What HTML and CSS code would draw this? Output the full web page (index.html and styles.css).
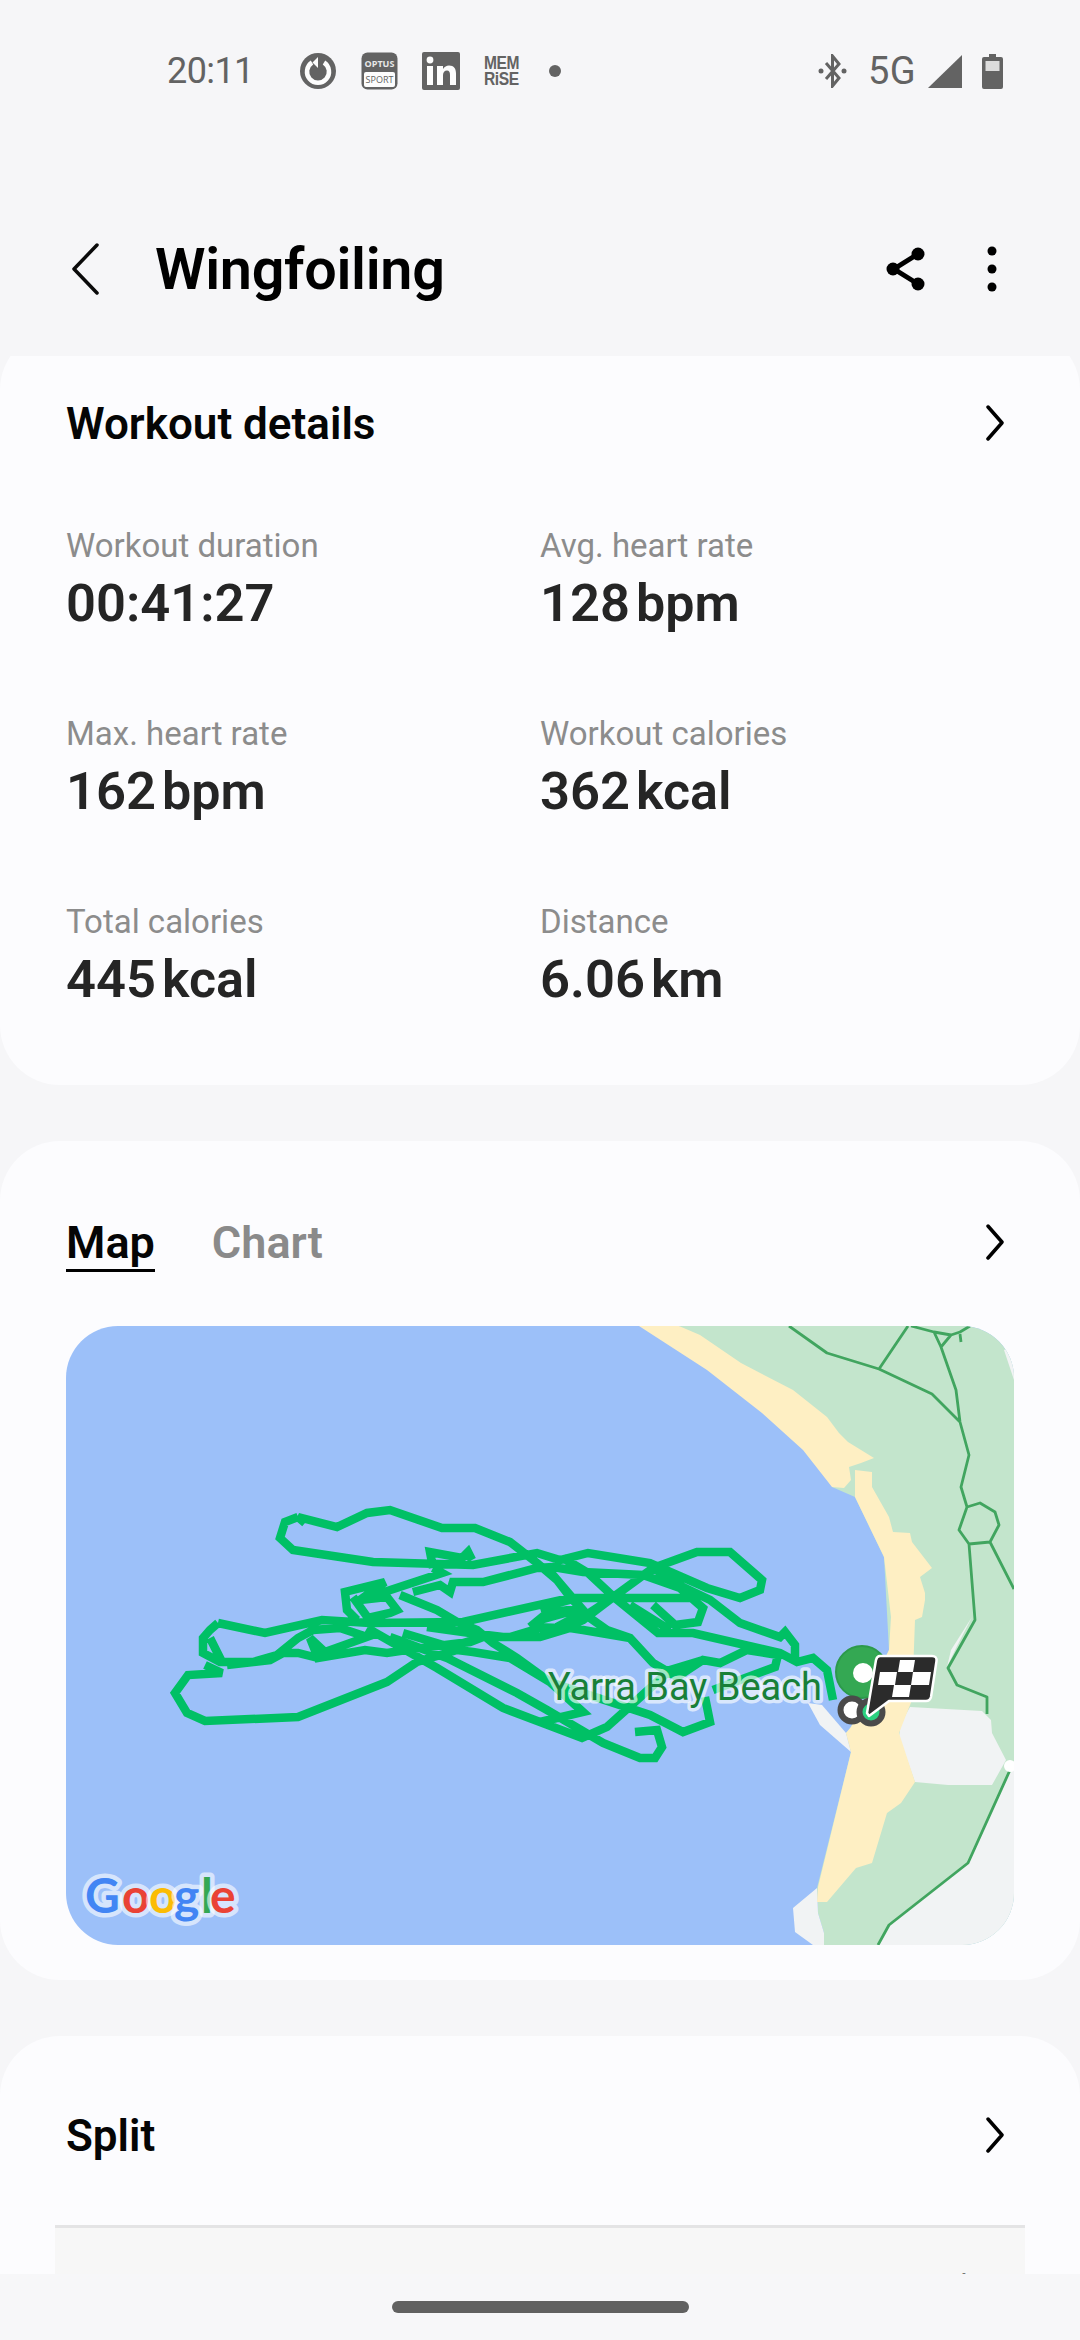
FILE: index.html
```html
<!DOCTYPE html>
<html lang="en">
<head>
<meta charset="utf-8">
<title>Wingfoiling</title>
<link rel="stylesheet" href="styles.css">
</head>
<body>
<div class="app">
  <div class="status">
    <span class="time">20:11</span>
    <svg class="si si-garmin" viewBox="0 0 36 38"><circle cx="18" cy="19" r="18" class="g-fill"/><path d="M12 10.500 A11 11 0 1 0 24 10.500" class="g-ring"/><path d="M18 5 L18 16 L12.500 10.500 Z" class="g-white"/></svg>
    <svg class="si si-optus" viewBox="0 0 37 38"><rect x="0.500" y="0.500" width="36" height="37" rx="6" class="g-fill"/><rect x="3" y="20" width="31" height="15" rx="2" class="g-white"/><text x="18.500" y="15" class="optus-top">OPTUS</text><text x="18.500" y="31" class="optus-bot">SPORT</text></svg>
    <svg class="si si-linkedin" viewBox="0 0 38 38"><rect width="38" height="38" rx="2" class="g-fill"/><rect x="5" y="14" width="6" height="19" class="g-white"/><circle cx="8" cy="8" r="3.400" class="g-white"/><path d="M15 14h6v3c1.400-2.300 3.500-3.500 6-3.500 5 0 7 3.200 7 8V33h-6V23c0-2.800-.8-4.500-3-4.500-2.400 0-4 1.700-4 4.600V33h-6z" class="g-white"/></svg>
    <div class="memrise"><span>MEM</span><span>RiSE</span></div>
    <span class="dot"></span>
    <span class="status-gap"></span>
    <svg class="si si-bt" viewBox="0 0 29 34"><path d="M8 9 L21 24 L14.500 32 V2 L21 10 L8 25" class="bt-line"/><circle cx="3" cy="17" r="2.500" class="g-fill"/><circle cx="26" cy="17" r="2.500" class="g-fill"/></svg>
    <span class="net">5G</span>
    <svg class="si si-signal" viewBox="0 0 34 33"><path d="M34 0 V33 H0 Z" class="g-fill"/></svg>
    <svg class="si si-batt" viewBox="0 0 21 35"><path d="M7 0h7v3h5a2 2 0 0 1 2 2v28a2 2 0 0 1-2 2H2a2 2 0 0 1-2-2V5a2 2 0 0 1 2-2h5z" class="g-fill"/><rect x="3.500" y="7" width="14" height="10" class="g-pale"/></svg>
  </div>

  <header class="header">
    <svg class="back" viewBox="0 0 28 52"><path d="M26 2 L3 26 L26 50" class="chev-thin"/></svg>
    <h1 class="title">Wingfoiling</h1>
    <svg class="share" viewBox="0 0 40 44"><path d="M32 7 L8 22 L32 37" class="share-line"/><circle cx="32" cy="7" r="6.500"/><circle cx="7" cy="22" r="6.500"/><circle cx="32" cy="37" r="6.500"/></svg>
    <svg class="more" viewBox="0 0 10 46"><circle cx="5" cy="5" r="4.500"/><circle cx="5" cy="23" r="4.500"/><circle cx="5" cy="41" r="4.500"/></svg>
  </header>

  <main class="scroller">
    <section class="card card-details">
      <div class="card-head">
        <h2 class="card-title">Workout details</h2>
        <svg class="chev" viewBox="0 0 20 36"><path d="M3 2 L17 18 L3 34" class="chev-line"/></svg>
      </div>
      <div class="stats">
        <div class="stat"><div class="stat-label">Workout duration</div><div class="stat-value">00:41:27</div></div>
        <div class="stat"><div class="stat-label">Avg. heart rate</div><div class="stat-value">128<span class="unit">bpm</span></div></div>
        <div class="stat"><div class="stat-label">Max. heart rate</div><div class="stat-value">162<span class="unit">bpm</span></div></div>
        <div class="stat"><div class="stat-label">Workout calories</div><div class="stat-value">362<span class="unit">kcal</span></div></div>
        <div class="stat"><div class="stat-label">Total calories</div><div class="stat-value">445<span class="unit">kcal</span></div></div>
        <div class="stat"><div class="stat-label">Distance</div><div class="stat-value">6.06<span class="unit">km</span></div></div>
      </div>
    </section>

    <section class="card card-map">
      <div class="tabs">
        <span class="tab tab-on">Map</span>
        <span class="tab">Chart</span>
        <svg class="chev" viewBox="0 0 20 36"><path d="M3 2 L17 18 L3 34" class="chev-line"/></svg>
      </div>
      <div class="map">
        <svg class="map-svg" viewBox="66 1326 948 619">
          <rect x="66" y="1326" width="948" height="619" class="water"/>
          <path class="land" d="M679 1326H1014V1945H824V1933L818 1913L817 1888L851 1752L846 1733L851 1727L889 1650L884 1557L855 1497L832 1487L844 1480L849 1467Z"/>
          <path class="grey" d="M1004 1350L1014 1380V1345Z"/>
          <path class="grey" d="M910 1707L982 1711L991 1720L992 1733L1006 1760L992 1785L948 1785L915 1782L899 1737L901 1723Z"/>
          <path class="grey" d="M1010 1770H1014V1945H878L889 1925L968 1863Z"/>
          <path class="grey" d="M793 1908L817 1888L818 1913L824 1933V1945H813L795 1932Z"/>
          <path class="grey" d="M808 1703L822 1705L846 1733L851 1752L820 1725Z"/>
          <path class="grey" d="M972 1617L951 1650L947 1667L956 1648Z"/>
          <path class="sand" d="M639 1326H679L700 1335L741 1363L793 1390L827 1417L839 1433L848 1442L874 1458L861 1463L849 1467L851 1480L844 1488L832 1487L803 1450L762 1413L707 1370Z"/>
          <path class="sand" d="M855 1470L872 1472V1487L889 1517L893 1532L910 1533L912 1542L932 1568L920 1577L925 1593V1600L922 1617L915 1620L912 1700L899 1733L915 1782L901 1803L887 1813L872 1863L856 1868L827 1902H817L818 1887L851 1752L846 1733L851 1727L889 1650L891 1617L884 1557L855 1497Z"/>
          <path class="road" d="M789 1326L827 1353L879 1369L932 1394L960 1422L969 1455L961 1487L967 1507L980 1503L995 1512L999 1525L990 1542L969 1544L959 1530L967 1507M879 1369L908 1326M911 1326L934 1332L941 1347L956 1390L960 1422M934 1332L951 1335L960 1332L970 1326M960 1334L961 1342M951 1335L941 1347M990 1542L1014 1589M969 1544L975 1620L948 1668L957 1685L987 1697V1714M1010 1770L968 1863L889 1925L878 1945"/>
          <circle cx="1010" cy="1766" r="6" class="white-fill"/>
          <path class="track" d="M305 1523L298 1517L337 1527L367 1513L390 1510L442 1528L475 1528L510 1542L537 1563L557 1580L570 1597L590 1618L607 1630L630 1638L653 1663L677 1677L703 1660L720 1663L747 1650L778 1655L775 1667L713 1690
          M298 1517L285 1522L280 1538L293 1550L373 1562L473 1565L537 1553L560 1560L588 1553L650 1563L707 1588L740 1598L760 1590L762 1580L730 1552L697 1552L653 1568L612 1598L583 1620L560 1630L540 1628L510 1637
          M433 1568L430 1552L462 1558L468 1552L472 1560M433 1568L442 1573L360 1600L385 1582L345 1592L347 1610L357 1620
          M360 1600L387 1597L397 1610L390 1613L368 1618L353 1597
          M413 1592L440 1585L450 1592L453 1582L483 1582L537 1568L553 1567L583 1572L643 1575L680 1588L703 1608L698 1622L675 1625L653 1605
          M400 1595L437 1610L457 1622L477 1630L493 1643L517 1658L550 1682L583 1693L650 1715L683 1732L710 1722L705 1697
          M218 1623L265 1633L322 1620L370 1623L463 1622L570 1598L700 1598
          M218 1623L210 1630L203 1638L203 1653L220 1662L253 1662L277 1655L298 1638L313 1630L340 1628L367 1637L325 1652L310 1638L318 1658L365 1650L387 1653L420 1648L470 1642L483 1637L540 1637L570 1628L583 1630L630 1638
          M210 1638L222 1662M227 1665L270 1660L283 1653L298 1653L318 1658
          M205 1665L222 1673L188 1675L175 1693L187 1713L205 1721L298 1717L387 1682L417 1662L457 1650L473 1652L510 1658L550 1682L583 1712L540 1722
          M367 1628L437 1668L503 1708L540 1722L582 1738L607 1727L637 1700L670 1670L703 1660
          M390 1637L447 1658L517 1693L547 1710L603 1743L640 1758L655 1758L662 1747L657 1730L635 1732
          M427 1627L470 1633L503 1637M403 1633L450 1647L483 1637
          M530 1627L547 1613L583 1608M530 1627L560 1628L583 1617L612 1598
          M547 1568L570 1595L590 1618
          M563 1558L588 1573L615 1598L658 1633L693 1633L780 1653L797 1662L813 1658L827 1670L833 1700
          M653 1568L683 1587L710 1600L740 1623L780 1637L785 1632L795 1645L795 1658
          M630 1605L670 1630M540 1608L577 1598M540 1620L583 1608M557 1627L583 1613"/>
          <text x="548" y="1700" class="poi">Yarra Bay Beach</text>
          <circle cx="862" cy="1672" r="26" class="pin"/>
          <circle cx="863" cy="1673" r="10" class="white-fill"/>
          <circle cx="852" cy="1710" r="11.500" class="ring"/>
          <circle cx="871" cy="1712" r="11.500" class="ring ring-green"/>
          <path class="flag" d="M880 1656H932Q937 1656 936.500 1661L931 1697Q930 1701 926 1701H889L869 1716L867 1713L876 1660Q877 1656 880 1656Z"/>
          <path class="white-fill" d="M900 1660H915L913 1672H898ZM880 1672H897L895 1685H878ZM913 1672H931L929 1685H911ZM894 1685H911L909 1697H892Z"/>
          <text class="goog"><tspan x="85" y="1913" class="c-blue">G</tspan><tspan x="122" y="1913" class="c-red">o</tspan><tspan x="149" y="1913" class="c-yellow">o</tspan><tspan x="174" y="1913" class="c-blue">g</tspan><tspan x="201" y="1913" class="c-green">l</tspan><tspan x="210" y="1913" class="c-red">e</tspan></text>
        </svg>
      </div>
    </section>

    <section class="card card-split">
      <div class="card-head">
        <h2 class="card-title">Split</h2>
        <svg class="chev" viewBox="0 0 20 36"><path d="M3 2 L17 18 L3 34" class="chev-line"/></svg>
      </div>
      <div class="split-table">
        <span></span>
        <span class="split-col">Duration</span>
        <span class="split-col">Avg. speed</span>
      </div>
    </section>
  </main>

  <footer class="navbar"><span class="pill"></span></footer>
</div>
</body>
</html>
```

FILE: styles.css
```css
* { box-sizing: border-box; }
html, body { margin: 0; padding: 0; }
body { width: 1080px; height: 2340px; overflow: hidden; background: #f6f6f8; font-family: Roboto, "Noto Sans", sans-serif; }
.app { display: flex; flex-direction: column; height: 2340px; }

/* status bar */
.status { flex: none; height: 142px; display: flex; align-items: center; padding-left: 167px; padding-right: 77px; color: #636363; }
.time { font-size: 36px; letter-spacing: -0.6px; width: 133px; }
.si { display: block; flex: none; }
.si-garmin { width: 36px; height: 38px; margin-right: 25px; }
.si-optus { width: 37px; height: 38px; margin-right: 24px; }
.si-linkedin { width: 38px; height: 38px; margin-right: 24px; }
.g-fill { fill: #636363; }
.g-white { fill: #fdfdfd; }
.g-pale { fill: #dcdcdc; }
.g-ring { fill: none; stroke: #fdfdfd; stroke-width: 4.500; }
.optus-top, .optus-bot { font-family: "Open Sans", sans-serif; font-weight: 700; font-size: 9px; text-anchor: middle; }
.optus-top { fill: #e8e8e8; }
.optus-bot { fill: #636363; font-weight: 400; }
.memrise { width: 36px; display: flex; flex-direction: column; font-family: "Liberation Sans", sans-serif; font-weight: 700; font-size: 19px; line-height: 16px; letter-spacing: -0.5px; color: #636363; margin-right: 29px; transform: scaleX(0.82); transform-origin: left center; white-space: nowrap; }
.dot { width: 12px; height: 12px; border-radius: 50%; background: #636363; }
.status-gap { flex: 1; }
.si-bt { width: 29px; height: 34px; margin-right: 21px; }
.bt-line { fill: none; stroke: #636363; stroke-width: 3; }
.net { font-size: 38px; letter-spacing: 0.4px; width: 60px; }
.si-signal { width: 34px; height: 33px; margin-right: 20px; }
.si-batt { width: 21px; height: 35px; }

/* header */
.header { flex: none; height: 84px; margin: 85px 0 45px; display: flex; align-items: center; padding-left: 71px; padding-right: 83px; }
.back { width: 28px; height: 52px; margin-right: 56px; flex: none; }
.chev-thin { fill: none; stroke: #0a0a0a; stroke-width: 3.500; stroke-linecap: round; stroke-linejoin: round; }
.title { margin: 0; flex: 1; font-size: 57.500px; font-weight: 600; color: #000; letter-spacing: -0.3px; }
.share { width: 40px; height: 44px; margin-right: 61px; flex: none; }
.share circle { fill: #000; }
.share-line { fill: none; stroke: #000; stroke-width: 5; }
.more { width: 10px; height: 46px; flex: none; }
.more circle { fill: #000; }

/* scroller and cards */
.scroller { flex: 1; min-height: 0; overflow: hidden; }
.card { background: #fcfcfe; border-radius: 60px; padding: 0 66px; margin-bottom: 56px; }
.card-details { margin-top: -26px; padding-top: 68px; padding-bottom: 68px; }
.card-head { height: 52px; display: flex; align-items: center; justify-content: space-between; }
.card-title { margin: 0; font-size: 44px; font-weight: 600; color: #050505; }
.chev { width: 20px; height: 36px; flex: none; margin-right: 9px; }
.card-head .chev { margin-bottom: 3px; }
.chev-line { fill: none; stroke: #000; stroke-width: 3.500; stroke-linecap: round; stroke-linejoin: round; }

.stats { margin-top: 76px; display: grid; grid-template-columns: 474px 1fr; row-gap: 73px; }
.stat-label { font-size: 33px; line-height: 40px; color: #8c8c8c; }
.stat-value { font-size: 52.500px; line-height: 74px; font-weight: 600; color: #252525; }
.unit { margin-left: 6px; font-size: 52px; }

.card-map { padding-top: 68px; padding-bottom: 35px; }
.tabs { height: 68px; display: flex; align-items: flex-start; gap: 57px; margin-bottom: 49px; }
.tab { font-size: 45px; font-weight: 600; color: #8a8a8a; height: 62px; line-height: 68px; }
.tab-on { color: #050505; border-bottom: 3px solid #000; height: 63px; }
.tabs .chev { margin-left: auto; margin-top: 15px; }

.map { height: 619px; border-radius: 52px; overflow: hidden; }
.map-svg { display: block; width: 948px; height: 619px; }
.water { fill: #9cc0f9; }
.land { fill: #c3e5cc; }
.sand { fill: #feefc3; }
.grey { fill: #f1f3f4; }
.white-fill { fill: #fff; }
.road { fill: none; stroke: #41a55f; stroke-width: 2.800; stroke-linejoin: round; }
.track { fill: none; stroke: #00c065; stroke-width: 8.500; stroke-linejoin: miter; }
.poi { font-family: Roboto, sans-serif; font-size: 38px; fill: #188038; stroke: rgba(255,255,255,0.65); stroke-width: 7px; paint-order: stroke; stroke-linejoin: round; }
.pin { fill: #34a853; stroke: #2c9a4b; stroke-width: 2; }
.ring { fill: #fff; stroke: #4a4a4a; stroke-width: 6; }
.ring-green { fill: #2ad07f; }
.flag { fill: #2b2b2b; stroke: #fff; stroke-width: 2.500; stroke-linejoin: round; }
.goog { font-family: Lato, sans-serif; font-size: 48px; font-weight: 700; stroke: rgba(255,255,255,0.6); stroke-width: 9px; paint-order: stroke; stroke-linejoin: round; }
.c-blue { fill: #4285f4; }
.c-red { fill: #ea4335; }
.c-yellow { fill: #fbbc05; }
.c-green { fill: #34a853; }

.card-split { padding-top: 74px; height: 400px; margin-bottom: 0; border-bottom-left-radius: 0; border-bottom-right-radius: 0; }
.split-table { margin: 63px -11px 0; border-top: 3px solid #e4e4e5; background: #f7f7f7; height: 120px; padding-top: 37px; display: grid; grid-template-columns: 511px 255px 1fr; font-size: 30px; line-height: 40px; color: #777; }

/* nav bar */
.navbar { flex: none; height: 66px; background: #f7f7f9; display: flex; justify-content: center; padding-top: 27px; }
.pill { width: 297px; height: 12px; border-radius: 6px; background: #616161; }
```
